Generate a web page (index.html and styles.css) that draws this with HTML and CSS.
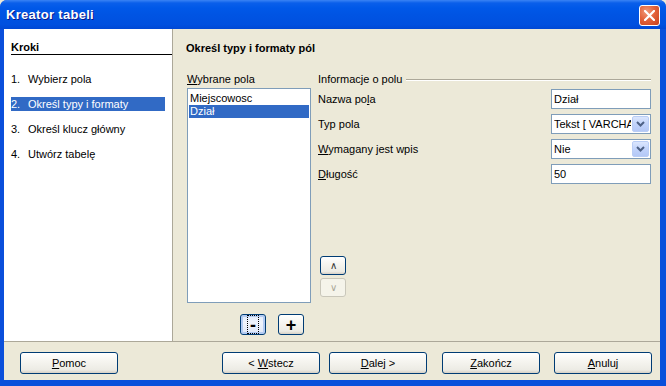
FILE: index.html
```html
<!DOCTYPE html>
<html>
<head>
  <meta charset="UTF-8">
  <title>Kreator tabeli</title>
  <link rel="stylesheet" href="styles.css">
</head>
<body>
  <div class="window">
    <div class="titlebar">
      <span class="title">Kreator tabeli</span>
      <span class="close">
        <svg width="11" height="11" viewBox="0 0 11 11"><path d="M1 1 L10 10 M10 1 L1 10" stroke="#fff" stroke-width="2.2" stroke-linecap="square"/></svg>
      </span>
    </div>
    <div class="frame">
      <div class="main">
        <div class="steps">
          <div class="steps-head">Kroki</div>
          <ul class="step-list">
            <li><span class="num">1.</span>Wybierz pola</li>
            <li class="active"><span class="num">2.</span>Określ typy i formaty</li>
            <li><span class="num">3.</span>Określ klucz główny</li>
            <li><span class="num">4.</span>Utwórz tabelę</li>
          </ul>
        </div>
        <div class="page">
          <h1>Określ typy i formaty pól</h1>
          <div class="cols">
            <div class="fields-col">
              <div class="label"><u>W</u>ybrane pola</div>
              <div class="listbox">
                <div class="item">Miejscowosc</div>
                <div class="item sel">Dział</div>
              </div>
              <div class="pm">
                <button class="btn small focus"><span class="focus-ring">-</span></button>
                <button class="btn small">+</button>
              </div>
            </div>
            <div class="info-col">
              <div class="group-head"><span>Informacje o polu</span><span class="rule"></span></div>
              <div class="row first">
                <span>Nazwa po<u>l</u>a</span>
                <div class="field">Dział</div>
              </div>
              <div class="row">
                <span>Typ pola</span>
                <div class="field combo"><span class="val">Tekst [ VARCHAR ]</span><span class="drop"><svg width="9" height="6" viewBox="0 0 9 6"><path d="M1 1 L4.5 4.5 L8 1" fill="none" stroke="#4d6185" stroke-width="2"/></svg></span></div>
              </div>
              <div class="row">
                <span><u>W</u>ymagany jest wpis</span>
                <div class="field combo"><span class="val">Nie</span><span class="drop"><svg width="9" height="6" viewBox="0 0 9 6"><path d="M1 1 L4.5 4.5 L8 1" fill="none" stroke="#4d6185" stroke-width="2"/></svg></span></div>
              </div>
              <div class="row">
                <span><u>D</u>ługość</span>
                <div class="field">50</div>
              </div>
              <div class="updown">
                <button class="btn arrow">&#8743;</button>
                <button class="btn arrow disabled">&#8744;</button>
              </div>
            </div>
          </div>
        </div>
      </div>
      <div class="footer">
        <button class="btn wide help"><span><u>P</u>omoc</span></button>
        <button class="btn wide back"><span>&lt; <u>W</u>stecz</span></button>
        <button class="btn wide next"><span><u>D</u>alej &gt;</span></button>
        <button class="btn wide finish"><span><u>Z</u>akończ</span></button>
        <button class="btn wide cancel"><span><u>A</u>nuluj</span></button>
      </div>
    </div>
  </div>
</body>
</html>
```

FILE: styles.css
```css
* {
  box-sizing: border-box;
}
body {
  margin: 0;
  font-family: "Liberation Sans", Arial, sans-serif;
  font-size: 11px;
  color: #000;
  background: #ece9d8;
}
.window {
  width: 666px;
  height: 386px;
  display: flex;
  flex-direction: column;
  background: #0a4fdb;
  border-radius: 7px 7px 0 0;
  overflow: hidden;
}
.titlebar {
  height: 29px;
  display: flex;
  align-items: center;
  justify-content: space-between;
  padding: 0 6px 0 6px;
  background: linear-gradient(#3a83f4 0, #0a5fea 3px, #0058e8 8px, #0054e3 50%, #0050df 85%, #0048d4 100%);
}
.title {
  color: #fff;
  font-weight: bold;
  font-size: 13px;
  letter-spacing: 0.3px;
  text-shadow: 1px 1px 0 #0a1a8c;
}
.close {
  width: 21px;
  height: 21px;
  display: flex;
  align-items: center;
  justify-content: center;
  border: 1px solid #fff;
  border-radius: 3px;
  background: radial-gradient(circle at 35% 30%, #f09a7a 0, #e3633c 45%, #c8401a 100%);
  margin-top: 1px;
}
.frame {
  flex: 1;
  display: flex;
  flex-direction: column;
  margin: 0 6px 6px 4px;
  background: #ece9d8;
}
.main {
  height: 312px;
  display: flex;
}
.steps {
  width: 169px;
  background: #fff;
  border-right: 1px solid #aca899;
  padding-top: 11px;
}
.steps-head {
  margin-left: 7px;
  font-weight: bold;
  line-height: 14px;
  border-bottom: 1px solid #000;
}
.step-list {
  list-style: none;
  margin: 17px 0 0 7px;
  padding: 0;
}
.step-list li {
  width: 154px;
  height: 14px;
  line-height: 14px;
  margin-bottom: 11px;
  display: flex;
}
.step-list li.active {
  background: #316ac5;
  color: #fff;
}
.num {
  width: 17px;
}
.page {
  flex: 1;
  padding: 12px 0 0 13px;
}
h1 {
  margin: 0;
  font-size: 11px;
  line-height: 14px;
  font-weight: bold;
}
.cols {
  display: flex;
  margin-top: 17px;
  gap: 7px;
}
.fields-col {
  width: 124px;
  margin-left: 1px;
}
.label {
  line-height: 14px;
}
.listbox {
  margin-top: 2px;
  height: 215px;
  background: #fff;
  border: 1px solid #7f9db9;
  padding: 3px 1px 0 1px;
}
.item {
  height: 13px;
  line-height: 13px;
  padding-left: 1px;
}
.item.sel {
  background: #316ac5;
  color: #fff;
}
.pm {
  display: flex;
  gap: 12px;
  margin: 11px 0 0 53px;
}
.btn {
  font-family: inherit;
  font-size: 11px;
  color: #000;
  border: 1px solid #003c74;
  border-radius: 3px;
  background: linear-gradient(#ffffff 0, #f6f5f0 40%, #ecebe4 85%, #d6d0c5 100%);
  padding: 0;
  display: flex;
  align-items: center;
  justify-content: center;
}
.btn.small {
  width: 26px;
  height: 21px;
  font-size: 18px;
  font-weight: bold;
  line-height: 1;
}
.btn.focus {
  box-shadow: inset 0 0 0 2px #b3cbf2;
  background: linear-gradient(#dfe9fb 0, #f0f4fc 40%, #dde6f7 100%);
}
.focus-ring {
  display: flex;
  align-items: center;
  justify-content: center;
  width: 12px;
  height: 19px;
  border: 1px dotted #000;
}
.info-col {
  width: 333px;
}
.group-head {
  display: flex;
  align-items: center;
  line-height: 14px;
  gap: 4px;
}
.rule {
  flex: 1;
  height: 2px;
  border-top: 1px solid #aca899;
  border-bottom: 1px solid #fff;
  margin-top: 2px;
}
.row {
  display: flex;
  justify-content: space-between;
  align-items: center;
  height: 20px;
  margin-top: 5px;
}
.row.first {
  margin-top: 3px;
}
.field {
  width: 100px;
  height: 20px;
  background: #fff;
  border: 1px solid #7f9db9;
  line-height: 18px;
  padding-left: 2px;
  overflow: hidden;
  white-space: nowrap;
  display: flex;
}
.field.combo .val {
  flex: 1;
  overflow: hidden;
}
.drop {
  width: 17px;
  height: 16px;
  margin: 1px;
  border-radius: 2px;
  background: linear-gradient(#dbe6fd 0, #c1d3fb 50%, #b4c8f6 100%);
  border: 1px solid #b9cdf5;
  display: flex;
  align-items: center;
  justify-content: center;
}
.updown {
  margin: 72px 0 0 2px;
  display: flex;
  flex-direction: column;
  gap: 3px;
}
.btn.arrow {
  width: 26px;
  height: 19px;
  font-size: 10px;
  color: #333;
}
.btn.disabled {
  border-color: #c9c7ba;
  color: #aca899;
  background: #f5f4ea;
}
.footer {
  flex: 1;
  border-top: 1px solid #aca899;
  display: flex;
  padding: 10px 0 0 16px;
}
.btn.wide {
  width: 98px;
  height: 22px;
}
.back {
  margin-left: 104px;
}
.next {
  margin-left: 9px;
}
.finish {
  margin-left: 15px;
}
.cancel {
  margin-left: 14px;
}
```
